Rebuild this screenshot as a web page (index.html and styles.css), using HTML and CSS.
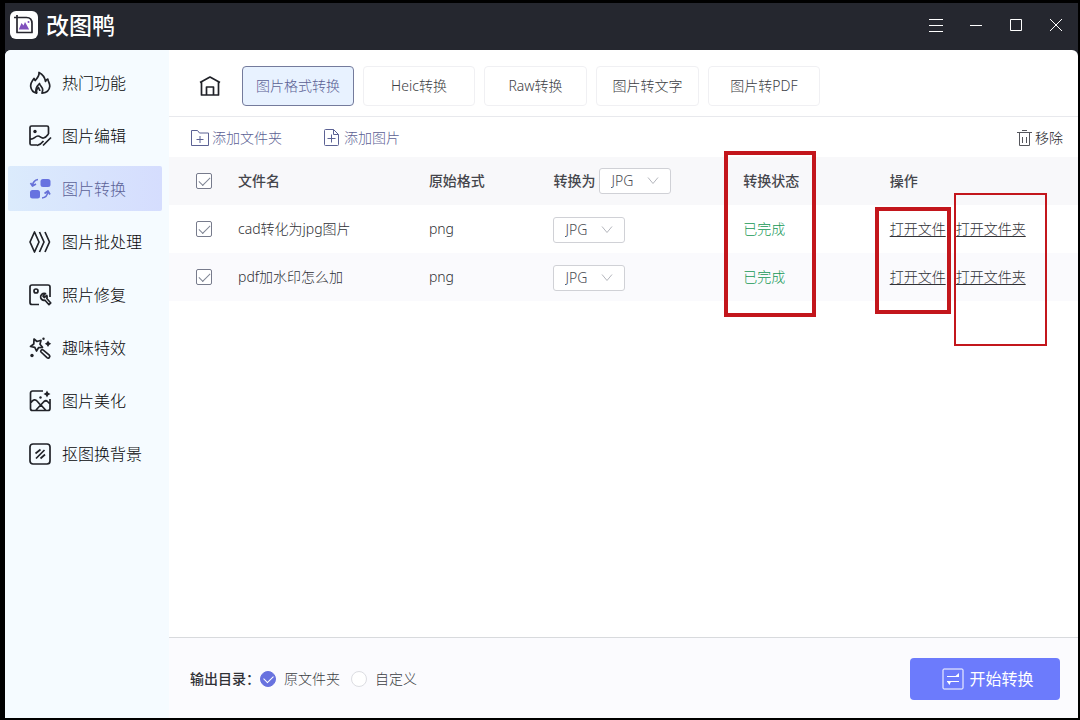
FILE: index.html
```html
<!DOCTYPE html>
<html lang="zh-CN">
<head>
<meta charset="utf-8">
<title>改图鸭</title>
<link rel="stylesheet" href="styles.css">
</head>
<body>
<div class="window">
  <header class="titlebar">
    <svg class="logo" viewBox="0 0 28 28" aria-hidden="true">
      <rect width="28" height="28" rx="6" fill="#fff"/>
      <path d="M4 6.500h12.500q5.500 0 5.500 6V21.500H7V4" fill="none" stroke="#27262e" stroke-width="1.700" stroke-linejoin="round"/>
      <path d="M8.800 18.500l2.700-6.500 2 2.500 1.500-3.500 4.200 7.500z" fill="#8050bd"/>
      <circle cx="18.500" cy="11" r="1" fill="#8050bd"/>
    </svg>
    <h1 class="brand">改图鸭</h1>
    <div class="window-buttons">
      <button class="window-button" aria-label="菜单"><svg viewBox="0 0 16 16"><path d="M1 2.500h14M1 8.500h14M1 14.500h14"/></svg></button>
      <button class="window-button" aria-label="最小化"><svg viewBox="0 0 16 16"><path d="M2 8.500h12"/></svg></button>
      <button class="window-button" aria-label="最大化"><svg viewBox="0 0 16 16"><path d="M2.500 2.500h11v11h-11z"/></svg></button>
      <button class="window-button" aria-label="关闭"><svg viewBox="0 0 16 16"><path d="M2 2l12 12M14 2L2 14"/></svg></button>
    </div>
  </header>

  <div class="body">
    <nav class="sidebar">
      <a class="nav-item" href="#"><svg class="icon" viewBox="0 0 24 24"><path d="M11 1.500c.5 3.500-1.700 5.500-3.700 8C6.800 9 6.500 8.300 6 7.500c-2 2.500-3.700 5-3.300 8.200.5 3.500 2.800 5.800 5.800 6.500-1.700-3.500-.3-6.500 3-9.700.3 2.500 3.500 3.500 3.200 6.500l-.7 3.200c4.500-.6 7.500-3.200 7.800-7 .2-2.800-1.600-4.200-2-7.200-1 .3-1.800 1-2.300 2.500C17 7 15 3.500 11 1.500z"/><path d="M9 22c-1-2-.2-4.200 1.500-5.500.2 1.500 1.500 2 1.300 3.500"/></svg>热门功能</a>
      <a class="nav-item" href="#"><svg class="icon" viewBox="0 0 24 24"><path d="M20.500 10V3.500A1.500 1.500 0 0 0 19 2H3.500A1.500 1.500 0 0 0 2 3.500v16A1.500 1.500 0 0 0 3.500 21H9M2 15c3.500 1 5-3 8-3 2.500 0 3 2.500 5.500 2 2-.3 3.500-2 5-4M9 21.500c3-.5 4.500-2 6.500-4.500M15 21.500l8-8"/><circle class="fill" cx="7" cy="7.500" r="1.700"/></svg>图片编辑</a>
      <a class="nav-item active" href="#" aria-current="page"><svg class="icon" viewBox="0 0 24 24"><rect class="fill" x="12.500" y="2" width="10" height="8" rx="2.500"/><rect class="fill" x="2" y="13" width="10" height="8.500" rx="2.500"/><path d="M10 2.500c-3 .5-5 2.500-5.500 6M2.500 6l2 3 3.500-2M14 21c3.500-.3 5.500-3 6-6.500M16.500 16.500l3.500-2.500 2 3.500"/></svg>图片转换</a>
      <a class="nav-item" href="#"><svg class="icon" viewBox="0 0 24 24"><path d="M6.500 2L2 12l4.500 10L11 12zM11.500 2L16 12l-4.500 10M17 2l4.500 10L17 22"/></svg>图片批处理</a>
      <a class="nav-item" href="#"><svg class="icon" viewBox="0 0 24 24"><path d="M11 21.500H4a2 2 0 0 1-2-2V4a2 2 0 0 1 2-2h16a2 2 0 0 1 2 2v10"/><circle cx="8" cy="8" r="2"/><path d="M17.500 10.500c-3-.8-5.500 1.500-4.800 4.300.5 2 2.300 2.700 4.300 2.400l4 4.500 1.800-1.700-4-4.500c.5-1 .5-2 0-3l-2.600 2-1.200-1.300z"/></svg>照片修复</a>
      <a class="nav-item" href="#"><svg class="icon" viewBox="0 0 24 24"><path d="M6 3l3 2.500 4-1.200-1 4 2.500 3-4 .4-2 3.300-1.700-3.700L2.500 10.500 5.800 8zM13 16c-1-1.500 1-3 2.300-1.800l6 5c1.500 1.600-.8 3.800-2.300 2.500z"/><path class="fill" d="M20 4.500l1.200 2 2 1.200-2 1.200-1.200 2-1.200-2-2-1.200 2-1.200z"/><circle class="fill" cx="15.500" cy="2.800" r="1.200"/><circle class="fill" cx="4" cy="19.500" r="1.700"/></svg>趣味特效</a>
      <a class="nav-item" href="#"><svg class="icon" viewBox="0 0 24 24"><path d="M15 2H4.500a2 2 0 0 0-2 2v15.500a2 2 0 0 0 2 2h15.500a2 2 0 0 0 2-2V10M3 13.500c2-3 4.500-3.500 6-1.500l3 3.500M8 21l8-8.500q2-1.500 3.500 0l2.500 2.500M12.500 15.500l5.500 6"/><path class="fill" d="M19 1.500l1.200 2.300L22.500 5l-2.300 1.200L19 8.500l-1.200-2.300L15.500 5l2.300-1.200z"/><circle class="fill" cx="12.500" cy="8.500" r="1.200"/></svg>图片美化</a>
      <a class="nav-item" href="#"><svg class="icon" viewBox="0 0 24 24"><rect x="2" y="2" width="20" height="20" rx="3"/><path d="M7.500 11.500l5-4M8 16.500l8.500-8.500M12.500 16.500l4.500-4"/></svg>抠图换背景</a>
    </nav>

    <main class="main">
      <div class="tabs">
        <button class="home" aria-label="首页"><svg class="icon" viewBox="0 0 24 24"><path d="M2 8.500L12 3l10 5.500M3.500 8v13h17V8M8.500 21v-8h7v8"/></svg></button>
        <button class="tab wide selected">图片格式转换</button>
        <button class="tab wide">Heic转换</button>
        <button class="tab">Raw转换</button>
        <button class="tab">图片转文字</button>
        <button class="tab wide">图片转PDF</button>
      </div>

      <div class="toolbar">
        <button class="tool"><svg class="tool-icon" viewBox="0 0 20 20"><path d="M1.500 17.500v-15h6l2 2.500h9v12.500zM6.500 11.500h7M10 8v7"/></svg>添加文件夹</button>
        <button class="tool"><svg class="tool-icon" viewBox="0 0 20 20"><path d="M3.500 1.500h8l5 5v10a1 1 0 0 1-1 1h-12a1 1 0 0 1-1-1v-14a1 1 0 0 1 1-1zM11.500 1.500v5h5M5.500 10.500h8M9.500 6.500v8"/></svg>添加图片</button>
        <button class="tool remove"><svg class="tool-icon" viewBox="0 0 20 20"><path d="M3 4.500h15M8 2.500h5M5.500 5v12.500h10V5M8.500 9v6M12.500 9v6"/></svg>移除</button>
      </div>

      <table class="files">
        <colgroup><col class="col-check"><col class="col-name"><col class="col-format"><col class="col-target"><col class="col-status"><col></colgroup>
        <thead>
          <tr>
            <th class="check-cell"><input class="check" type="checkbox" checked aria-label="全选"></th>
            <th>文件名</th>
            <th>原始格式</th>
            <th><div class="target"><label for="format-all">转换为</label><span class="picker"><select id="format-all"><option>JPG</option></select><svg viewBox="0 0 12 12"><path d="M1 2.500l5 6 5-6"/></svg></span></div></th>
            <th>转换状态</th>
            <th>操作</th>
          </tr>
        </thead>
        <tbody>
          <tr>
            <td class="check-cell"><input class="check" type="checkbox" checked aria-label="选择 cad转化为jpg图片"></td>
            <td>cad转化为jpg图片</td>
            <td>png</td>
            <td><div class="target"><span class="picker"><select aria-label="转换为"><option>JPG</option></select><svg viewBox="0 0 12 12"><path d="M1 2.500l5 6 5-6"/></svg></span></div></td>
            <td class="done">已完成</td>
            <td><div class="actions"><a href="#">打开文件</a><a href="#">打开文件夹</a></div></td>
          </tr>
          <tr>
            <td class="check-cell"><input class="check" type="checkbox" checked aria-label="选择 pdf加水印怎么加"></td>
            <td>pdf加水印怎么加</td>
            <td>png</td>
            <td><div class="target"><span class="picker"><select aria-label="转换为"><option>JPG</option></select><svg viewBox="0 0 12 12"><path d="M1 2.500l5 6 5-6"/></svg></span></div></td>
            <td class="done">已完成</td>
            <td><div class="actions"><a href="#">打开文件</a><a href="#">打开文件夹</a></div></td>
          </tr>
        </tbody>
      </table>

      <footer class="footer">
        <span class="output-label" id="output-label">输出目录：</span>
        <div class="choices" role="radiogroup" aria-labelledby="output-label">
          <label class="choice"><input type="radio" name="output" checked>原文件夹</label>
          <label class="choice"><input type="radio" name="output">自定义</label>
        </div>
        <button class="start"><svg viewBox="0 0 22 22"><rect x="1" y="1" width="20" height="20" rx="1"/><path d="M5 8.500h12M17 13.500H5"/><path d="M13 8.500h4V5zM9 13.500H5l2.500 3.500z" fill="currentColor" stroke="none"/></svg>开始转换</button>
      </footer>
    </main>
  </div>
  <div class="mark mark-status"></div>
  <div class="mark mark-file"></div>
  <div class="mark mark-folder"></div>
</div>
</body>
</html>
```
FILE: styles.css
```css
* { box-sizing: border-box; }

body {
  margin: 0;
  background: #000;
  color: #303136;
  font: 300 14px/20px "Noto Sans", "Noto Sans CJK SC", sans-serif;
}

button, select { font: inherit; color: inherit; margin: 0; }
button { border: 0; background: none; padding: 0; }
a { color: inherit; text-decoration: none; }
svg { display: block; flex: none; fill: none; stroke: currentColor; }

.window {
  position: relative;
  display: flex;
  flex-direction: column;
  min-height: 100vh;
  padding: 3px 2px 2px 5px;
}

.titlebar {
  display: flex;
  align-items: center;
  height: 53px;
  margin-bottom: -6px;
  padding: 0 14px 9px 5px;
  background: #25272f;
  color: #fff;
}

.logo { width: 28px; height: 28px; stroke: none; }
.brand { margin: 0 0 0 8px; font-size: 23px; line-height: 28px; font-weight: 500; }
.window-buttons { display: flex; gap: 24px; margin-left: auto; }
.window-button svg { width: 16px; height: 16px; }

.body {
  display: flex;
  flex: 1;
  overflow: hidden;
  border-radius: 6px 6px 0 0;
  background: #fff;
}

.sidebar {
  display: flex;
  flex-direction: column;
  gap: 8px;
  flex: 0 0 164px;
  padding: 10px 7px 10px 3px;
  background: #f5fbff;
}

.nav-item {
  display: flex;
  align-items: center;
  gap: 10px;
  height: 45px;
  padding-left: 20px;
  font-size: 16px;
  line-height: 24px;
  color: #050608;
}

.nav-item.active {
  border-radius: 2px;
  background: linear-gradient(90deg, #dbebfc, #d5ddfe);
  color: #5c6298;
}

.icon {
  width: 24px;
  height: 24px;
  stroke: #202228;
  stroke-width: 1.7;
  stroke-linejoin: round;
}

.icon .fill { fill: #202228; stroke: none; }
.active .icon { stroke: #6772d8; }
.active .icon .fill { fill: #6772e0; }

.main { display: flex; flex-direction: column; flex: 1; min-width: 0; }

.tabs {
  display: flex;
  align-items: center;
  gap: 9px;
  padding: 16px 20px 10px 29px;
  border-bottom: 1px solid #e8e9ed;
}

.home { margin-right: 11px; }

.tab {
  width: 103px;
  height: 40px;
  border: 1px solid #f0f0f3;
  border-radius: 4px;
  color: #3c3e44;
}

.tab.wide { width: 112px; }
.tab.selected { border-color: #747b9c; background: #e8f2ff; color: #5a6094; }

.toolbar {
  display: flex;
  align-items: center;
  gap: 40px;
  height: 40px;
  padding: 2px 15px 0 21px;
}

.tool { display: flex; align-items: center; gap: 2px; color: #5c5f94; }
.tool-icon { width: 20px; height: 20px; stroke: #5c6294; }
.remove { margin-left: auto; gap: 1px; color: #26272c; }
.remove .tool-icon { stroke: #55565c; }

.files { width: 100%; border-collapse: collapse; table-layout: fixed; }
.col-check { width: 69px; }
.col-name { width: 21%; }
.col-format { width: 13.6%; }
.col-target { width: 21%; }
.col-status { width: 16.1%; }
.files th, .files td { height: 48px; padding: 0; text-align: left; }
.files th { font-weight: 500; color: #45464c; }
.files thead tr { background: #f8f8fa; }
.files tbody tr:nth-child(even) { background: #fafafd; }
.files .check-cell { padding-left: 27px; }
.files .done { color: #149855; }

.check {
  display: grid;
  place-items: center;
  width: 16px;
  height: 16px;
  margin: 0;
  appearance: none;
  border: 1px solid #777b8c;
  border-radius: 2px;
  background: #fff;
}

.check:checked::after, .choice input:checked::after {
  content: "";
  width: 10px;
  height: 5px;
  margin-top: -3px;
  border: solid #7f8594;
  border-width: 0 0 1px 1px;
  transform: rotate(-45deg);
}

.target { display: flex; align-items: center; gap: 4px; padding-left: 1px; }
.picker { display: grid; align-items: center; width: 72px; }
.files td .picker { padding-top: 2px; }
.picker > * { grid-area: 1 / 1; }

.picker select {
  width: 100%;
  height: 26px;
  padding: 0 11px;
  appearance: none;
  border: 1px solid #d0d1d6;
  border-radius: 3px;
  background: #fff;
  font-weight: 300;
  line-height: 20px;
  color: #4c4e54;
}

.picker svg {
  justify-self: end;
  width: 12px;
  height: 12px;
  margin-right: 12px;
  stroke: #b4b6bd;
  pointer-events: none;
}

.actions { display: flex; gap: 10px; white-space: nowrap; }
.actions a { text-decoration: underline; text-underline-offset: 2px; }

.footer {
  display: flex;
  align-items: center;
  margin-top: auto;
  min-height: 81px;
  padding: 2px 18px 0 21px;
  border-top: 1px solid #d8dadd;
  background: #fbfbfe;
}

.output-label { width: 70px; font-weight: 500; white-space: nowrap; }
.choices { display: flex; gap: 11px; }
.choice { display: flex; align-items: center; gap: 8px; color: #3c3e44; }

.choice input {
  display: grid;
  place-items: center;
  width: 16px;
  height: 16px;
  margin: 0;
  appearance: none;
  border: 1px solid #dcdde2;
  border-radius: 50%;
  background: #fff;
}

.choice input:checked { border-color: #6872df; background: #6872df; }
.choice input:checked::after { width: 8px; border-color: #fff; }

.start {
  display: flex;
  align-items: center;
  justify-content: center;
  gap: 5px;
  width: 150px;
  height: 42px;
  margin-left: auto;
  padding-left: 6px;
  border-radius: 4px;
  background: #6c7bfc;
  color: #fff;
  font-size: 16px;
  font-weight: 400;
}

.start svg { width: 22px; height: 22px; }

/* Red annotation frames lying over the table */
.mark { position: absolute; border: 4px solid #c3161c; pointer-events: none; }
.mark-status { left: 724px; top: 151px; width: 92px; height: 166px; }
.mark-file { left: 875px; top: 207px; width: 76px; height: 107px; }
.mark-folder { left: 954px; top: 193px; width: 93px; height: 153px; border-width: 2px; }
```
